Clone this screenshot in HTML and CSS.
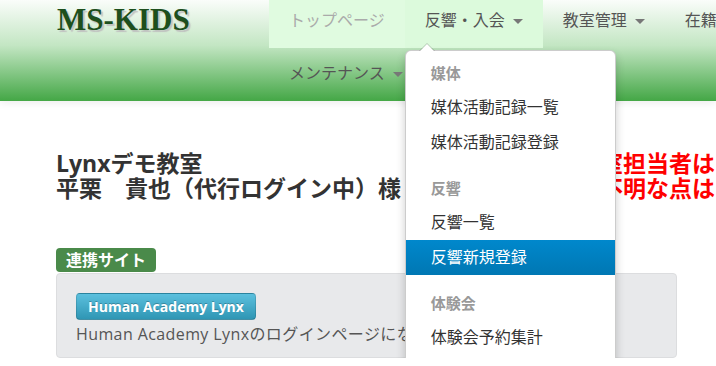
FILE: index.html
```html
<!DOCTYPE html>
<html lang="ja">

<head>
    <meta charset="UTF-8">
    <meta name="viewport" content="width=device-width, initial-scale=1.0">
    <title>MS-KIDS</title>
    <link rel="stylesheet" href="styles.css">
</head>

<body>
    <header class="navbar">
        <div class="navbarInner">
            <a class="brand" href="#">MS-KIDS</a>
            <ul class="nav">
                <li class="navItem current"><a href="#">トップページ</a></li>
                <li class="navItem open">
                    <a href="#">反響・入会<b class="caret"></b></a>
                    <ul class="dropdown">
                        <li class="dropHeader">媒体</li>
                        <li class="dropItem"><a href="#">媒体活動記録一覧</a></li>
                        <li class="dropItem"><a href="#">媒体活動記録登録</a></li>
                        <li class="dropHeader">反響</li>
                        <li class="dropItem"><a href="#">反響一覧</a></li>
                        <li class="dropItem active"><a href="#">反響新規登録</a></li>
                        <li class="dropHeader">体験会</li>
                        <li class="dropItem"><a href="#">体験会予約集計</a></li>
                        <li class="dropItem"><a href="#">体験会一覧</a></li>
                    </ul>
                </li>
                <li class="navItem"><a href="#">教室管理<b class="caret"></b></a></li>
                <li class="navItem"><a href="#">在籍管理<b class="caret"></b></a></li>
                <li class="navItem"><a href="#">メンテナンス<b class="caret"></b></a></li>
            </ul>
        </div>
    </header>

    <div class="main">
        <div class="titleRow">
            <div class="titleBlock">
                <h2>Lynxデモ教室</h2>
                <h2>平栗　貴也（代行ログイン中）様</h2>
            </div>
            <div class="notice">
                <p>教室担当者は山田です。</p>
                <p>ご不明な点はお問い合わせください。</p>
            </div>
        </div>

        <span class="label">連携サイト</span>
        <div class="well">
            <a class="btnInfo" href="#">Human Academy Lynx</a>
            <p class="wellText">Human Academy Lynxのログインページになります。</p>
        </div>
    </div>
</body>

</html>
```

FILE: styles.css
```css
body {
    margin: 0;
    font-family: "Open Sans", "Noto Sans CJK JP", sans-serif;
    color: #333;
    background: #fff;
    overflow: hidden;
}

a {
    text-decoration: none;
}

ul {
    list-style: none;
    margin: 0;
    padding: 0;
}

.navbar {
    height: 101px;
    background: linear-gradient(to bottom, #fafdfa 0%, #c3e6c3 45%, #44a746 100%);
    box-shadow: 0 2px 8px rgba(0, 0, 0, 0.08);
    position: relative;
    z-index: 2;
}

.navbarInner {
    display: flex;
    padding-left: 57px;
}

.brand {
    width: 212px;
    flex-shrink: 0;
    font-family: "Liberation Serif", serif;
    font-weight: bold;
    font-size: 31px;
    line-height: 40px;
    color: #1d4f1d;
    text-shadow: 2px 2px 1px rgba(190, 190, 190, 0.9);
}

.nav {
    display: flex;
    flex-wrap: wrap;
    row-gap: 5px;
    width: 560px;
    flex-shrink: 0;
}

.navItem {
    position: relative;
}

.navItem > a {
    display: flex;
    align-items: center;
    padding: 10px 20px 18px;
    font-size: 16px;
    line-height: 20px;
    color: #555;
}

.navItem.current {
    background: #e0fbe0;
}

.navItem.current > a {
    color: #aaa;
}

.navItem.open {
    background: #dcfadc;
}

.caret {
    width: 0;
    height: 0;
    margin-left: 8px;
    margin-top: 2px;
    border-top: 5px solid #777;
    border-left: 5px solid transparent;
    border-right: 5px solid transparent;
}

.dropdown {
    position: absolute;
    top: 50px;
    left: 0;
    width: 209px;
    padding: 5px 0;
    background: #fff;
    border: 1px solid rgba(0, 0, 0, 0.2);
    border-radius: 6px;
    box-shadow: 0 5px 10px rgba(0, 0, 0, 0.2);
}

.dropdown::before {
    content: "";
    position: absolute;
    top: -8px;
    left: 13px;
    border-bottom: 8px solid rgba(0, 0, 0, 0.2);
    border-left: 8px solid transparent;
    border-right: 8px solid transparent;
}

.dropdown::after {
    content: "";
    position: absolute;
    top: -7px;
    left: 14px;
    border-bottom: 7px solid #fff;
    border-left: 7px solid transparent;
    border-right: 7px solid transparent;
}

.dropHeader {
    height: 34px;
    line-height: 34px;
    padding: 0 25px;
    font-size: 15px;
    font-weight: bold;
    color: #999;
}

.dropItem + .dropHeader {
    margin-top: 11px;
}

.dropItem a {
    display: block;
    height: 35px;
    line-height: 35px;
    padding: 0 25px;
    font-size: 16px;
    color: #333;
}

.dropItem.active a {
    background: linear-gradient(to bottom, #0088cc, #0077b3);
    color: #fff;
}

.main {
    padding: 0 56px;
}

.titleRow {
    display: flex;
    margin-top: 50px;
}

.titleBlock {
    width: 521px;
    flex-shrink: 0;
}

.titleBlock h2 {
    margin: 0;
    font-size: 23px;
    line-height: 25px;
    font-weight: bold;
    color: #333;
}

.notice {
    white-space: nowrap;
}

.notice p {
    margin: 0;
    font-size: 23px;
    line-height: 25px;
    font-weight: bold;
    color: #ff0000;
}

.label {
    display: inline-block;
    margin-top: 47px;
    padding: 0 10px;
    height: 24px;
    line-height: 24px;
    font-size: 16px;
    font-weight: bold;
    color: #fff;
    background: #4a8a4a;
    border-radius: 4px;
}

.well {
    width: 581px;
    margin-top: 1px;
    padding: 19px 19px 13px;
    background: #e8e9eb;
    border: 1px solid #dcdddf;
    border-radius: 4px;
}

.btnInfo {
    display: inline-block;
    height: 25px;
    line-height: 25px;
    padding: 0 11px;
    font-size: 14px;
    font-weight: bold;
    color: #fff;
    background: linear-gradient(to bottom, #5bc0de, #2f96b4);
    border: 1px solid rgba(0, 0, 0, 0.12);
    border-bottom-color: rgba(0, 0, 0, 0.25);
    border-radius: 4px;
    text-shadow: 0 -1px 0 rgba(0, 0, 0, 0.25);
}

.wellText {
    margin: 4px 0 0;
    font-size: 16px;
    line-height: 20px;
    letter-spacing: 0.4px;
    color: #555;
    white-space: nowrap;
}
```
